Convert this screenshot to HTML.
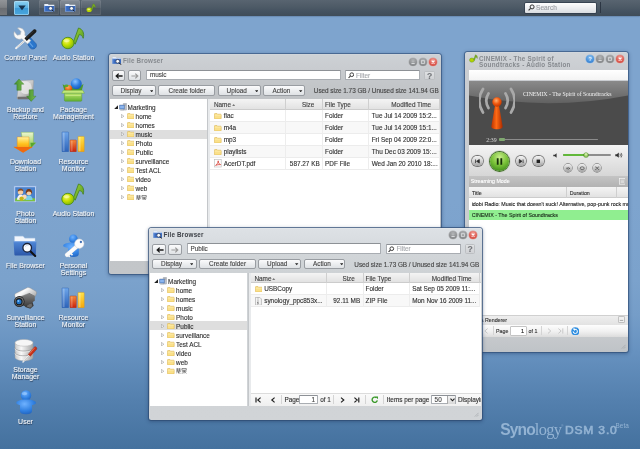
<!DOCTYPE html><html><head><meta charset="utf-8"><title>Synology DSM 3.0</title><style>
*{box-sizing:border-box;margin:0;padding:0}
html,body{width:640px;height:449px;overflow:hidden}
body{position:relative;font-family:"Liberation Sans",sans-serif;font-size:6.4px;color:#303030;-webkit-text-stroke:.12px;
background:linear-gradient(to bottom,rgb(126,164,206) 0px,rgb(126,164,206) 200px,rgb(123,162,204) 280px,rgb(117,157,200) 315px,rgb(103,146,192) 350px,rgb(84,128,174) 400px,rgb(68,113,158) 449px)}
.abs,.t,.w,.b,.i{position:absolute}
.t{white-space:nowrap;line-height:8px;height:8px}
.lbl{position:absolute;white-space:nowrap;font-size:7px;line-height:7px;color:#f4f6f8;text-align:center;width:60px;text-shadow:0.5px 0.8px 0.8px rgba(20,30,50,.75)}
#bar{position:absolute;left:0;top:0;width:640px;height:16px;background:linear-gradient(to bottom,#586470 0,#4d5a66 45%,#445260 70%,#3f4c58 100%);box-shadow:0 .5px 1.5px rgba(50,70,100,.6)}
.tb{position:absolute;top:0;height:15px;border-radius:1.5px;background:linear-gradient(to bottom,#77808d,#59626f 50%,#4b5461 52%,#4d5663);box-shadow:inset 0 0 0 .5px rgba(255,255,255,.12)}
.win{position:absolute;border-radius:2.5px;background:linear-gradient(to bottom,#d2d7dc 0,#cdd1d5 1.5px,#c9ccd0 14px,#c3c6c9 30px,#c0c3c6 45px,#c3c6c9 100%);box-shadow:0 0 0 1px rgba(45,75,115,.58),0 1px 3.5px 1px rgba(30,55,95,.42)}
.ttl{position:absolute;font-weight:bold;font-size:6.3px;letter-spacing:.2px;color:#868a8f;-webkit-text-stroke:0;white-space:nowrap;line-height:8px}
.btn{position:absolute;height:10px;border:.8px solid #999da2;border-radius:1.5px;background:linear-gradient(to bottom,#fbfbfc,#eceef0 50%,#dfe2e5);text-align:center;line-height:8.5px;white-space:nowrap;color:#444}
.inp{position:absolute;height:10.5px;background:#fff;border:.8px solid #a9adb2;border-top-color:#8d9196;border-radius:1px;line-height:9px;white-space:nowrap;color:#444}
.pane{position:absolute;background:#fff;overflow:hidden}
.hd{position:absolute;background:linear-gradient(to bottom,#f4f4f4,#e2e2e2);border-bottom:.6px solid #cccccc}
.cb{position:absolute;width:8.2px;height:8.2px;border-radius:50%}
.sep{position:absolute;width:.6px;background:#d4d4d4}
body>*:not(#bar),#bar>*{filter:blur(.3px)}
</style></head><body>
<div id="bar">
<div class="abs" style="left:-3px;top:-3px;width:10px;height:18px;background:linear-gradient(to bottom,#9a9da1,#7d8084 58%,#6a6d72 60%,#74777b)"></div>
<div class="abs" style="left:14px;top:.5px;width:15px;height:14.5px;border-radius:2px;background:linear-gradient(to bottom,#8fd2f2,#58b0e2 50%,#3d9ad6 52%,#4aa6dc);box-shadow:0 0 0 .6px #bfe6fa inset,0 0 1px #2b4a66"></div>
<svg class="abs" style="left:17.5px;top:5px" width="8" height="6" viewBox="0 0 8 6"><path d="M0.3 0.6h7.4L4 5.2z" fill="#16324d"/></svg>
<div class="tb" style="left:39px;width:19.5px;background:linear-gradient(to bottom,#6e7883,#57626d 50%,#4c5762 52%,#4f5a65)"></div>
<div class="tb" style="left:60px;width:19.5px;background:linear-gradient(to bottom,#868e98,#6c7580 50%,#606a75 52%,#646d78)"></div>
<div class="tb" style="left:81px;width:19.5px;background:linear-gradient(to bottom,#6e7883,#57626d 50%,#4c5762 52%,#4f5a65)"></div>
<svg class="abs" style="left:43.5px;top:3px" width="11" height="9" viewBox="0 0 11 9"><path d="M0.3 .9h3.600l.8.900h5.600v6.700H0.300z" fill="#eaf1fb"/><path d="M0.300 3h10v5.500H0.300z" fill="#376ac0"/><path d="M.3 3h.9v5.500H.3z" fill="#6f9be0"/><circle cx="6.6" cy="5.4" r="1.9" fill="#f2f6fb" stroke="#1b2a44" stroke-width=".6"/><path d="M8 6.9l1.6 1.6" stroke="#111" stroke-width=".9"/></svg>
<svg class="abs" style="left:64.5px;top:3px" width="11" height="9" viewBox="0 0 11 9"><path d="M0.3 .9h3.600l.8.900h5.600v6.700H0.300z" fill="#eaf1fb"/><path d="M0.300 3h10v5.500H0.300z" fill="#376ac0"/><path d="M.3 3h.9v5.500H.3z" fill="#6f9be0"/><circle cx="6.6" cy="5.4" r="1.9" fill="#f2f6fb" stroke="#1b2a44" stroke-width=".6"/><path d="M8 6.9l1.6 1.6" stroke="#111" stroke-width=".9"/></svg>
<svg class="abs" style="left:86px;top:3px" width="10" height="10" viewBox="0 0 10 10"><ellipse cx="3.2" cy="6.8" rx="2.7" ry="2.3" fill="#b5d400"/><path d="M5 6.500L7.100.8c1.700.3 2.700 2 2.100 4.300-.5-1.200-1.100-1.600-1.800-1.600L6.100 7.300z" fill="#78aa22" stroke="#5a8c18" stroke-width=".3"/><ellipse cx="2.8" cy="6.3" rx="1.4" ry=".9" fill="#e4f07a"/></svg>
<div class="abs" style="left:525px;top:2.5px;width:71px;height:10.5px;border-radius:1px;background:linear-gradient(to bottom,#fdfdfd,#e9ebee 60%,#d9dce0);box-shadow:0 0 0 .7px #2f3b4a"></div>
<svg class="abs" style="left:527.5px;top:4px" width="7" height="7" viewBox="0 0 7 7"><circle cx="4.1" cy="2.9" r="2" fill="none" stroke="#333" stroke-width="1"/><path d="M2.6 4.4L.6 6.4" stroke="#333" stroke-width="1.1"/></svg>
<div class="t" style="left:536px;top:3.6px;color:#9a9da2;font-size:6.6px">Search</div>
<div class="abs" style="left:600.3px;top:2px;width:.7px;height:11px;background:#2c3643"></div>
</div><svg width="0" height="0" style="position:absolute"><defs>
<radialGradient id="gNote" cx=".38" cy=".35" r=".75"><stop offset="0" stop-color="#f3f56a"/><stop offset=".45" stop-color="#c6e000"/><stop offset="1" stop-color="#6fae12"/></radialGradient>
<linearGradient id="gFlag" x1="0" y1="0" x2="1" y2="1"><stop offset="0" stop-color="#9fd43a"/><stop offset="1" stop-color="#4f9420"/></linearGradient>
<linearGradient id="gBlue" x1="0" y1="0" x2="0" y2="1"><stop offset="0" stop-color="#6ea6ea"/><stop offset="1" stop-color="#2c62b8"/></linearGradient>
<linearGradient id="gRed" x1="0" y1="0" x2="0" y2="1"><stop offset="0" stop-color="#f58a3a"/><stop offset="1" stop-color="#c8200c"/></linearGradient>
<linearGradient id="gYel" x1="0" y1="0" x2="0" y2="1"><stop offset="0" stop-color="#ffe24a"/><stop offset="1" stop-color="#f4a70c"/></linearGradient>
<linearGradient id="gOr" x1="0" y1="0" x2="0" y2="1"><stop offset="0" stop-color="#fff3a0"/><stop offset=".45" stop-color="#ffc21c"/><stop offset="1" stop-color="#f07010"/></linearGradient>
<linearGradient id="gGr" x1="0" y1="0" x2="0" y2="1"><stop offset="0" stop-color="#eef7d0"/><stop offset="1" stop-color="#8cc848"/></linearGradient>
<linearGradient id="gHdd" x1="0" y1="0" x2="1" y2="1"><stop offset="0" stop-color="#f4f4f4"/><stop offset=".5" stop-color="#c9c9c9"/><stop offset="1" stop-color="#8e8e8e"/></linearGradient>
<linearGradient id="gArr" x1="0" y1="0" x2="1" y2="0"><stop offset="0" stop-color="#3f8a2c"/><stop offset="1" stop-color="#7cc050"/></linearGradient>
<linearGradient id="gBox" x1="0" y1="0" x2="0" y2="1"><stop offset="0" stop-color="#b9e36a"/><stop offset="1" stop-color="#5fae30"/></linearGradient>
<radialGradient id="gBall" cx=".4" cy=".3" r=".8"><stop offset="0" stop-color="#8cc4ff"/><stop offset=".5" stop-color="#2f7ee0"/><stop offset="1" stop-color="#1450a8"/></radialGradient>
<radialGradient id="gOball" cx=".4" cy=".3" r=".8"><stop offset="0" stop-color="#ffb060"/><stop offset=".6" stop-color="#f06010"/><stop offset="1" stop-color="#b83808"/></radialGradient>
<linearGradient id="gFold" x1="0" y1="0" x2="0" y2="1"><stop offset="0" stop-color="#5088d8"/><stop offset="1" stop-color="#2c58aa"/></linearGradient>
<radialGradient id="gUser" cx=".42" cy=".3" r=".8"><stop offset="0" stop-color="#6fb2ff"/><stop offset=".6" stop-color="#2f7fe0"/><stop offset="1" stop-color="#1f5cb4"/></radialGradient>
<linearGradient id="gCyl" x1="0" y1="0" x2="1" y2="0"><stop offset="0" stop-color="#c8c8c8"/><stop offset=".35" stop-color="#f8f8f8"/><stop offset="1" stop-color="#a4a4a4"/></linearGradient>
<linearGradient id="gCam" x1="0" y1="0" x2="0" y2="1"><stop offset="0" stop-color="#8a8a8a"/><stop offset="1" stop-color="#3a3a3a"/></linearGradient>
</defs></svg>
<svg class="abs" style="left:13px;top:26.6px;overflow:visible" width="24" height="24" viewBox="0 0 24 24"><path d="M13 12.5L3 21.2" stroke="#f2f2f2" stroke-width="1.9" stroke-linecap="round"/><path d="M12.6 12.9L4 20.4" stroke="#b0b0b0" stroke-width=".6"/><path d="M12.400 13.800l4.400-3.800 6 6.400c1.200 1.400.900 3.500-.7 4.800-1.600 1.300-3.700 1.200-4.900-.200z" fill="#2a76cc" stroke="#1a4f96" stroke-width=".5"/><path d="M15.200 14.200l4.800 5.600" stroke="#7ab4f0" stroke-width="1.100" opacity=".7"/><path transform="translate(-1.300,-1.700) scale(1.160)" d="M2.200 5.400c-.9 2.800.3 5.300 2.600 6.300 1.400.6 2.800.4 3.900-.2l5 4.700 2.800-3-5.200-4.600c.5-1.600.1-3.400-1.200-4.800C8.900 2.400 6.800 1.800 5 2.400l3 3-.6 2.600-2.600.5z" fill="#f8f8f8" stroke="#aeb2b6" stroke-width=".5"/><path d="M11.400 11.300L20.400 2.700c.8-.7 1.900-.6 2.600.1.700.8.700 1.900-.1 2.600L13.800 13.900z" fill="#1c1c1c"/><path d="M13.200 11.200L20.800 4" stroke="#6a6a6a" stroke-width=".7" stroke-dasharray=".8 .7"/></svg>
<svg class="abs" style="left:61px;top:26px;overflow:visible" width="24" height="24" viewBox="0 0 24 24"><path d="M12.400 16L17.500 2c3.900 1 6.200 5 4.700 10.300-.9-2.700-2.500-3.700-4-3.700L14.200 18.200z" fill="url(#gFlag)" stroke="#43801a" stroke-width=".8" stroke-linejoin="round"/><ellipse cx="6.900" cy="17" rx="6.100" ry="5.700" fill="url(#gNote)" stroke="#4f8e16" stroke-width=".9"/><ellipse cx="5.6" cy="14.6" rx="3" ry="1.7" fill="#fbffc0" opacity=".55"/></svg>
<svg class="abs" style="left:13px;top:78px;overflow:visible" width="24" height="24" viewBox="0 0 24 24"><path d="M7.200 2.700l12.300-.7c.7 0 1.100.5 1.100 1.200l-.9 16.600c0 .7-.5 1.200-1.200 1.200H5.200c-.8 0-1.300-.6-1.200-1.300L6 3.800c.1-.7.500-1.100 1.200-1.100z" fill="url(#gHdd)" stroke="#9a9a9a" stroke-width=".4"/><ellipse cx="12.800" cy="9.800" rx="6" ry="6.300" fill="#e9e9e9" opacity=".8"/><path d="M4.500 18.800h15v1.600c0 .5-.4.900-.9.900H5.500c-.6 0-1-.4-1-1z" fill="#6e6e6e"/><path d="M6 1L1.300 6.200h2.600v6.100h4.300V6.200h2.700z" fill="url(#gArr)" stroke="#2f7424" stroke-width=".4"/><path d="M18.200 23.400l-4.600-5.200h2.500v-6.400h4.200v6.400H23z" fill="url(#gArr)" stroke="#2f7424" stroke-width=".4"/></svg>
<svg class="abs" style="left:61px;top:78px;overflow:visible" width="24" height="24" viewBox="0 0 24 24"><path d="M1.600 6.200l4.200 2.300 12.700.1 4-2.700-1.900 7.200H3.500z" fill="#4e9a2a"/><circle cx="15.300" cy="5.800" r="5.500" fill="url(#gBall)"/><circle cx="7.600" cy="10.400" r="3.500" fill="url(#gOball)"/><ellipse cx="5.500" cy="7.800" rx="2" ry="1.300" fill="#5aa82e"/><path d="M2.400 12.300h19.400l1.600 3H.8z" fill="#c3e87a" stroke="#5aa030" stroke-width=".4"/><path d="M3.400 15.300h17.400v7c0 .6-.4 1-1 1H4.400c-.6 0-1-.4-1-1z" fill="url(#gBox)" stroke="#4e9628" stroke-width=".4"/><path d="M4.500 17.500h15.200" stroke="#d8f29a" stroke-width="1" opacity=".6"/></svg>
<svg class="abs" style="left:13px;top:130px;overflow:visible" width="24" height="24" viewBox="0 0 24 24"><path d="M8.200 2.300h12.200v10.500h2.300l-4.300 4.800-8-2z" fill="url(#gGr)" stroke="#7ab83a" stroke-width=".4"/><path d="M17.400 12.800h5.300l-4.600 4.600z" fill="#58a62e"/><path d="M4.200 7h11.800v10h3.300L10.100 22.400.9 17h3.300z" fill="url(#gOr)" stroke="#e8820c" stroke-width=".4"/><path d="M.9 17h18.400l-9.200 5.400z" fill="#f06a0e"/></svg>
<svg class="abs" style="left:61px;top:130px;overflow:visible" width="24" height="24" viewBox="0 0 24 24"><rect x="1" y="2" width="6.600" height="19.800" rx=".6" fill="url(#gBlue)" stroke="#2456a8" stroke-width=".4"/><rect x="9" y="10" width="6.300" height="11.800" rx=".6" fill="url(#gRed)" stroke="#b02808" stroke-width=".4"/><rect x="17" y="6.400" width="6.200" height="15.400" rx=".6" fill="url(#gYel)" stroke="#e09408" stroke-width=".4"/><rect x="1.600" y="2.600" width="2" height="18.500" fill="#fff" opacity=".25"/><rect x="9.600" y="10.600" width="2" height="10.600" fill="#fff" opacity=".22"/><rect x="17.600" y="7" width="2" height="14.200" fill="#fff" opacity=".3"/></svg>
<svg class="abs" style="left:13px;top:182px;overflow:visible" width="24" height="24" viewBox="0 0 24 24"><rect x="1.400" y="4.600" width="22.200" height="16.400" fill="#2a4a7a" opacity=".35"/><rect x="1" y="4" width="22.200" height="16.400" fill="#bcd2f2" stroke="#86a8da" stroke-width=".5"/><rect x="2.200" y="5.200" width="19.800" height="14" fill="#4a82cc"/><path d="M2.200 16.800c3-1.600 6-1.400 9.800-.4 3.600-1 7-1 10 .2v2.600H2.200z" fill="#7cc242"/><path d="M4 17.800c0-3 1.400-5 3.600-5s3.800 2 3.800 5z" fill="#f4f4f4"/><path d="M12.600 18c0-3 1.400-4.600 3.500-4.600s3.500 1.800 3.500 4.600z" fill="#7ad0e8"/><circle cx="7.500" cy="10" r="2.700" fill="#f6cfa4"/><path d="M4.700 9.800c0-2.200 1.400-3.200 2.900-3.200s2.900 1 2.800 3c-1-1.400-3.600-1.800-5.700.2z" fill="#8a4a1c"/><circle cx="15.900" cy="10.600" r="2.700" fill="#f6cfa4"/><path d="M12.900 12.600c-.6-3.600.8-5.600 3-5.600 2.300 0 3.700 2 3.100 5.600-.6-2-1.200-3.200-3.100-3.200s-2.400 1.300-3 3.200z" fill="#7a3a14"/><circle cx="11.500" cy="14.800" r="2.300" fill="#f8dab8"/><circle cx="8.600" cy="16.600" r="2.200" fill="#c8b414"/></svg>
<svg class="abs" style="left:61px;top:182px;overflow:visible" width="24" height="24" viewBox="0 0 24 24"><path d="M12.400 16L17.500 2c3.900 1 6.200 5 4.700 10.300-.9-2.700-2.500-3.700-4-3.700L14.200 18.200z" fill="url(#gFlag)" stroke="#43801a" stroke-width=".8" stroke-linejoin="round"/><ellipse cx="6.900" cy="17" rx="6.100" ry="5.700" fill="url(#gNote)" stroke="#4f8e16" stroke-width=".9"/><ellipse cx="5.6" cy="14.6" rx="3" ry="1.7" fill="#fbffc0" opacity=".55"/></svg>
<svg class="abs" style="left:13px;top:234px;overflow:visible" width="24" height="24" viewBox="0 0 24 24"><path d="M1.600 2.200h8.400l1.800 2h10.200v6H1.600z" fill="#f2f6fc" stroke="#c6d4ea" stroke-width=".4"/><path d="M1.200 7.300h21.400c.5 0 .8.300.8.800l-.6 12.400c0 .5-.4.900-.9.900H2.300c-.5 0-.9-.4-.9-.9L.6 8.100c0-.5.200-.8.600-.8z" fill="url(#gFold)"/><path d="M1 7.700h22" stroke="#8ab0ea" stroke-width=".6"/><path d="M17.400 17.300l4.800 4.700" stroke="#111" stroke-width="2" stroke-linecap="round"/><circle cx="14.200" cy="13.800" r="4.300" fill="#fafcff" stroke="#1a2238" stroke-width="1.300"/><path d="M12.200 13a3 3 0 0 1 3.500-1.800" stroke="#c4d2e8" stroke-width=".8" fill="none"/></svg>
<svg class="abs" style="left:61px;top:234px;overflow:visible" width="24" height="24" viewBox="0 0 24 24"><circle cx="12.400" cy="4.900" r="4.300" fill="url(#gUser)"/><path d="M2.800 10.400c2.200-1.500 5.200-1.900 9.400-1.900s7.200.4 9.400 1.900c1 .7.700 2.200-.5 2.500l-3.300 1v6.200c0 2-1.900 3-5.400 3s-5.400-1-5.400-3v-6.200l-3.600-1c-1.200-.3-1.600-1.800-.6-2.500z" fill="url(#gUser)"/><path d="M15.600 12.600L6 20.900" stroke="#d0d4da" stroke-width="4.200" stroke-linecap="round"/><path d="M15.600 12.600L6 20.900" stroke="#fbfbfb" stroke-width="3.400" stroke-linecap="round"/><path d="M9.800 19.400l1.700 1.900M7.400 21.300l1.400 1.500" stroke="#f4f4f4" stroke-width="1.700"/><circle cx="18.300" cy="9.700" r="4.700" fill="#fcfcfc" stroke="#ccd0d6" stroke-width=".5"/><circle cx="19.900" cy="8" r="1.150" fill="#3f6eb4"/></svg>
<svg class="abs" style="left:13px;top:286px;overflow:visible" width="24" height="24" viewBox="0 0 24 24"><defs><linearGradient id="gHood" x1="0" y1="0" x2="1" y2=".6"><stop offset="0" stop-color="#d8d8d8"/><stop offset=".45" stop-color="#fbfbfb"/><stop offset="1" stop-color="#b4b4b4"/></linearGradient></defs><path d="M12.500 17.500l6.700-2.400 1.500 4.600-3.400 3-5.200-1.600z" fill="#3c3c3c"/><path d="M14.200 18.800l4.300-1.500.8 2.600-2.200 1.800-3-.9z" fill="#6a6a6a"/><path d="M2.600 10.600L15.400 6.400l6.400 3v5.400l-9.400 5.800-9.600-4.200z" fill="url(#gCam)"/><path d="M2.400 7.600L13.600 2c1.200-.6 2.500-.5 3.600.1l5.300 2.900c1 .6 1.300 1.800.9 2.800l-1.200 2.700-6.200-3.200-12.800 5C1.600 11.300 1.200 8.400 2.400 7.600z" fill="url(#gHood)" stroke="#8c8c8c" stroke-width=".4"/><path d="M16 7.300l6.200 3.200" stroke="#6e6e6e" stroke-width=".7"/><ellipse cx="6.300" cy="15.600" rx="5.300" ry="5.500" fill="#262626"/><ellipse cx="6.300" cy="15.600" rx="4.400" ry="4.600" fill="#7a7a7a"/><ellipse cx="6.100" cy="15.700" rx="3.500" ry="3.700" fill="#1a1a1a"/><circle cx="6" cy="15.800" r="2.500" fill="#2070c0"/><circle cx="5.400" cy="15.100" r="1" fill="#7cc0ff"/></svg>
<svg class="abs" style="left:61px;top:286px;overflow:visible" width="24" height="24" viewBox="0 0 24 24"><rect x="1" y="2" width="6.600" height="19.800" rx=".6" fill="url(#gBlue)" stroke="#2456a8" stroke-width=".4"/><rect x="9" y="10" width="6.300" height="11.800" rx=".6" fill="url(#gRed)" stroke="#b02808" stroke-width=".4"/><rect x="17" y="6.400" width="6.200" height="15.400" rx=".6" fill="url(#gYel)" stroke="#e09408" stroke-width=".4"/><rect x="1.600" y="2.600" width="2" height="18.500" fill="#fff" opacity=".25"/><rect x="9.600" y="10.600" width="2" height="10.600" fill="#fff" opacity=".22"/><rect x="17.600" y="7" width="2" height="14.200" fill="#fff" opacity=".3"/></svg>
<svg class="abs" style="left:13px;top:338px;overflow:visible" width="24" height="24" viewBox="0 0 24 24"><path d="M2 4.800v14.400c0 2 4 3.600 9 3.600s9-1.600 9-3.600V4.800z" fill="url(#gCyl)" stroke="#9c9c9c" stroke-width=".4"/><path d="M2 9.600c0 2 4 3.500 9 3.500s9-1.500 9-3.500M2 14.400c0 2 4 3.500 9 3.500s9-1.500 9-3.500" fill="none" stroke="#8c8c8c" stroke-width=".7"/><path d="M2 10.400c0 2 4 3.500 9 3.500s9-1.500 9-3.500M2 15.200c0 2 4 3.500 9 3.500s9-1.500 9-3.500" fill="none" stroke="#fff" stroke-width=".6" opacity=".8"/><ellipse cx="11" cy="4.800" rx="9" ry="3.400" fill="#f6f6f6" stroke="#b0b0b0" stroke-width=".5"/><path d="M16.800 16.800L10 24" stroke="#f0f0f0" stroke-width="1.400" stroke-linecap="round"/><path d="M16.600 17.400l-5.800 6" stroke="#8a8a8a" stroke-width=".4"/><path d="M15.200 16.400l5.800-7c.6-.7 1.500-.8 2.200-.2.700.6.800 1.600.2 2.300l-5.900 6.800z" fill="#c83018" stroke="#8a1c0c" stroke-width=".4"/><path d="M16.800 15.600l5-6" stroke="#f08868" stroke-width=".7"/></svg>
<svg class="abs" style="left:13px;top:390px;overflow:visible" width="24" height="24" viewBox="0 0 24 24"><circle cx="13" cy="5.500" r="5.200" fill="url(#gUser)"/><path d="M4 11.600c2.600-1.700 5.600-2 9-2s6.600.3 9.200 2c1.100.7.800 2.300-.5 2.700l-2.700.9v6c0 2-2.300 3-6 3s-6-1-6-3v-6l-2.600-.9c-1.200-.4-1.500-2-.4-2.700z" fill="url(#gUser)"/><ellipse cx="11.500" cy="3.600" rx="2.800" ry="1.700" fill="#a8d2ff" opacity=".55"/></svg>
<div class="lbl" style="left:-4.5px;top:54.3px">Control Panel</div>
<div class="lbl" style="left:43.5px;top:54.3px">Audio Station</div>
<div class="lbl" style="left:-4.5px;top:106.3px">Backup and</div>
<div class="lbl" style="left:-4.5px;top:113.3px">Restore</div>
<div class="lbl" style="left:43.5px;top:106.3px">Package</div>
<div class="lbl" style="left:43.5px;top:113.3px">Management</div>
<div class="lbl" style="left:-4.5px;top:158.3px">Download</div>
<div class="lbl" style="left:-4.5px;top:165.3px">Station</div>
<div class="lbl" style="left:43.5px;top:158.3px">Resource</div>
<div class="lbl" style="left:43.5px;top:165.3px">Monitor</div>
<div class="lbl" style="left:-4.5px;top:210.3px">Photo</div>
<div class="lbl" style="left:-4.5px;top:217.3px">Station</div>
<div class="lbl" style="left:43.5px;top:210.3px">Audio Station</div>
<div class="lbl" style="left:-4.5px;top:262.3px">File Browser</div>
<div class="lbl" style="left:43.5px;top:262.3px">Personal</div>
<div class="lbl" style="left:43.5px;top:269.3px">Settings</div>
<div class="lbl" style="left:-4.5px;top:314.3px">Surveillance</div>
<div class="lbl" style="left:-4.5px;top:321.3px">Station</div>
<div class="lbl" style="left:43.5px;top:314.3px">Resource</div>
<div class="lbl" style="left:43.5px;top:321.3px">Monitor</div>
<div class="lbl" style="left:-4.5px;top:366.3px">Storage</div>
<div class="lbl" style="left:-4.5px;top:373.3px">Manager</div>
<div class="lbl" style="left:-4.5px;top:418.3px">User</div><div class="win" style="left:108.9px;top:54.2px;width:332.3px;height:220.3px;"><div class="abs" style="left:-0.4px;top:-0.2px;width:332.7px;height:220.5px">
<svg class="abs" style="left:3.6px;top:2.2px" width="9.800" height="9.400" viewBox="0 0 9.800 9.400"><path d="M.4 1h3.400l.8.900h4.400v2H.4z" fill="#eef3fb" stroke="#b9c8e0" stroke-width=".3"/><path d="M.4 2.800h8.600v5H.4z" fill="#3a6cc2"/><path d="M.4 2.800h.9v5H.4z" fill="#7aa2e2"/><path d="M.4 2.800h8.600" stroke="#9cbcec" stroke-width=".5"/><circle cx="5.700" cy="5.300" r="1.900" fill="#f6f9fd" stroke="#1a2744" stroke-width=".65"/><path d="M7.100 6.800l1.900 1.900" stroke="#111" stroke-width="1"/></svg>
<div class="ttl" style="left:14.500px;top:3.200px;color:#868a8f">File Browser</div>
<div class="cb" style="left:300.2px;top:3.5px;background:radial-gradient(circle at 50% 30%,#b2b4b6,#909294 55%,#7c7e80);box-shadow:0 0 0 .6px #b4b6b8,0 .5px .7px rgba(255,255,255,.6)"><svg width="8.200" height="8.200" viewBox="0 0 8.200 8.200" style="display:block"><path d="M2.500 5.500h3.200" stroke="#d8dadc" stroke-width="1"/><path d="M2.900 3.700h2.400" stroke="#b8babc" stroke-width=".8"/></svg></div>
<div class="cb" style="left:310.2px;top:3.5px;background:radial-gradient(circle at 50% 30%,#b2b4b6,#909294 55%,#7c7e80);box-shadow:0 0 0 .6px #b4b6b8,0 .5px .7px rgba(255,255,255,.6)"><svg width="8.200" height="8.200" viewBox="0 0 8.200 8.200" style="display:block"><rect x="2.600" y="2.700" width="3" height="2.800" fill="none" stroke="#d8dadc" stroke-width=".8"/></svg></div>
<div class="cb" style="left:320.2px;top:3.5px;background:radial-gradient(circle at 50% 30%,#f2a49c,#de5e54 55%,#cf463c);box-shadow:0 0 0 .6px #d8a09a,0 .5px .7px rgba(255,255,255,.6)"><svg width="8.200" height="8.200" viewBox="0 0 8.200 8.200" style="display:block"><path d="M2.700 2.700l2.800 2.800M5.500 2.700L2.700 5.500" stroke="#fff" stroke-width="1.100"/></svg></div>
<div class="btn" style="left:3.300px;top:16.100px;width:13.600px;height:11px;border-radius:2px"><svg width="8" height="6" viewBox="0 0 8 6" style="position:absolute;left:2.300px;top:2px"><path d="M7.600 3H1.600M3.700.6L1.200 3l2.500 2.400" fill="none" stroke="#1a1a1a" stroke-width="1.300"/></svg></div>
<div class="btn" style="left:19.200px;top:16.100px;width:13.600px;height:11px;border-radius:2px"><svg width="8" height="6" viewBox="0 0 8 6" style="position:absolute;left:2.300px;top:2px"><path d="M.4 3h6M4.300.6L6.800 3 4.300 5.400" fill="none" stroke="#9a9a9a" stroke-width="1.200"/></svg></div>
<div class="inp" style="left:37.700px;top:15.800px;width:194.500px"><span class="t" style="left:2.700px;top:.600px">music</span></div>
<div class="inp" style="left:236.800px;top:16.200px;width:75px;height:10.300px"><svg class="abs" style="left:1.600px;top:1.300px" width="6.500" height="6.500" viewBox="0 0 7 7"><circle cx="4.100" cy="2.900" r="2" fill="none" stroke="#333" stroke-width="1"/><path d="M2.600 4.400L.6 6.400" stroke="#333" stroke-width="1.100"/></svg><span class="t" style="left:9.600px;top:.500px;color:#a4a7ab">Filter</span></div>
<div class="btn" style="left:315.800px;top:16.600px;width:10.600px;height:9.800px;font-weight:bold;color:#74777b;font-size:8.600px;line-height:8.800px;background:linear-gradient(#dfe1e3,#d0d2d5);border-color:#bcbfc2">?</div>
<div class="btn" style="left:3.2px;top:31px;width:44.4px;height:10.800px;border-radius:2px"><span class="t" style="left:7.9px;top:.800px">Display</span><svg class="abs" style="left:36.9px;top:3.8px" width="3.400" height="2.400" viewBox="0 0 3.400 2.400"><path d="M0 .2h3.400L1.700 2.300z" fill="#222"/></svg></div>
<div class="btn" style="left:49.9px;top:31px;width:57px;height:10.800px;border-radius:2px"><span class="t" style="left:9.2px;top:.800px">Create folder</span></div>
<div class="btn" style="left:109.1px;top:31px;width:43.2px;height:10.800px;border-radius:2px"><span class="t" style="left:8.0px;top:.800px">Upload</span><svg class="abs" style="left:36.1px;top:3.8px" width="3.400" height="2.400" viewBox="0 0 3.400 2.400"><path d="M0 .2h3.400L1.700 2.300z" fill="#222"/></svg></div>
<div class="btn" style="left:154.9px;top:31px;width:41.2px;height:10.800px;border-radius:2px"><span class="t" style="left:8.2px;top:.800px">Action</span><svg class="abs" style="left:34.8px;top:3.8px" width="3.400" height="2.400" viewBox="0 0 3.400 2.400"><path d="M0 .2h3.400L1.700 2.300z" fill="#222"/></svg></div>
<div class="t" style="left:205.300px;top:33.300px;color:#444;letter-spacing:-.03px">Used size 1.73 GB / Unused size 141.94 GB</div>
<div class="pane" style="left:1.100px;top:45px;width:97.400px;height:161.7px"><div class="abs" style="left:.4px;top:0">
<svg class="abs" style="left:3.600px;top:6.3px" width="4.200" height="4.200" viewBox="0 0 4.200 4.200"><path d="M4 .2v3.800H.2z" fill="#222"/></svg>
<svg class="abs" style="left:9px;top:4.3px" width="8" height="8" viewBox="0 0 8 8"><rect x="4.300" y=".3" width="3.200" height="6.800" rx=".3" fill="#c2c6cc" stroke="#858b95" stroke-width=".4"/><path d="M4.900 1.400h2M4.900 2.400h2" stroke="#8a9098" stroke-width=".4"/><rect x=".4" y="2" width="5.200" height="4.300" rx=".4" fill="#4f7fc8" stroke="#7e8ca4" stroke-width=".5"/><rect x="1.100" y="2.700" width="3.800" height="2.700" fill="#8cb6ee"/><path d="M1.600 6.500h2.800l.5 1.100H1.100z" fill="#a4aab4"/></svg>
<div class="t" style="left:17.600px;top:5.1px">Marketing</div>
<svg class="abs" style="left:10.800px;top:15.1px" width="3.400" height="4.400" viewBox="0 0 3.400 4.400"><path d="M.4.400l2.500 1.800L.4 4z" fill="#fff" stroke="#8a8a8a" stroke-width=".5"/></svg>
<svg class="abs" style="left:16.7px;top:14.4px" width="7.400" height="6.100" viewBox="0 0 8 6.6"><path d="M.4 1.3c0-.5.3-.8.8-.8h2l.7.8h3.200c.4 0 .7.300.7.700v3.800c0 .400-.3.700-.7.700H1.100c-.4 0-.7-.3-.7-.7z" fill="#fae08a" stroke="#d4a636" stroke-width=".5"/><path d="M.7 2.400h6.800" stroke="#fdf0bc" stroke-width=".6"/></svg>
<div class="t" style="left:25.600px;top:14.1px">home</div>
<svg class="abs" style="left:10.800px;top:24.1px" width="3.400" height="4.400" viewBox="0 0 3.400 4.400"><path d="M.4.400l2.500 1.800L.4 4z" fill="#fff" stroke="#8a8a8a" stroke-width=".5"/></svg>
<svg class="abs" style="left:16.7px;top:23.400000000000002px" width="7.400" height="6.100" viewBox="0 0 8 6.6"><path d="M.4 1.3c0-.5.3-.8.8-.8h2l.7.8h3.200c.4 0 .7.300.7.700v3.800c0 .400-.3.700-.7.700H1.100c-.4 0-.7-.3-.7-.7z" fill="#fae08a" stroke="#d4a636" stroke-width=".5"/><path d="M.7 2.400h6.800" stroke="#fdf0bc" stroke-width=".6"/></svg>
<div class="t" style="left:25.600px;top:23.1px">homes</div>
<div class="abs" style="left:0;top:30.5px;width:97px;height:9px;background:#dedede"></div>
<svg class="abs" style="left:10.800px;top:33.1px" width="3.400" height="4.400" viewBox="0 0 3.400 4.400"><path d="M.4.400l2.500 1.800L.4 4z" fill="#fff" stroke="#8a8a8a" stroke-width=".5"/></svg>
<svg class="abs" style="left:16.7px;top:32.4px" width="7.400" height="6.100" viewBox="0 0 8 6.6"><path d="M.4 1.3c0-.5.3-.8.8-.8h2l.7.8h3.200c.4 0 .7.300.7.700v3.800c0 .400-.3.700-.7.700H1.100c-.4 0-.7-.3-.7-.7z" fill="#fae08a" stroke="#d4a636" stroke-width=".5"/><path d="M.7 2.400h6.800" stroke="#fdf0bc" stroke-width=".6"/></svg>
<div class="t" style="left:25.600px;top:32.1px">music</div>
<svg class="abs" style="left:10.800px;top:42.1px" width="3.400" height="4.400" viewBox="0 0 3.400 4.400"><path d="M.4.400l2.500 1.800L.4 4z" fill="#fff" stroke="#8a8a8a" stroke-width=".5"/></svg>
<svg class="abs" style="left:16.7px;top:41.4px" width="7.400" height="6.100" viewBox="0 0 8 6.6"><path d="M.4 1.3c0-.5.3-.8.8-.8h2l.7.8h3.200c.4 0 .7.300.7.700v3.800c0 .400-.3.700-.7.700H1.100c-.4 0-.7-.3-.7-.7z" fill="#fae08a" stroke="#d4a636" stroke-width=".5"/><path d="M.7 2.400h6.800" stroke="#fdf0bc" stroke-width=".6"/></svg>
<div class="t" style="left:25.600px;top:41.1px">Photo</div>
<svg class="abs" style="left:10.800px;top:51.1px" width="3.400" height="4.400" viewBox="0 0 3.400 4.400"><path d="M.4.400l2.500 1.800L.4 4z" fill="#fff" stroke="#8a8a8a" stroke-width=".5"/></svg>
<svg class="abs" style="left:16.7px;top:50.4px" width="7.400" height="6.100" viewBox="0 0 8 6.6"><path d="M.4 1.3c0-.5.3-.8.8-.8h2l.7.8h3.200c.4 0 .7.300.7.700v3.800c0 .400-.3.700-.7.700H1.100c-.4 0-.7-.3-.7-.7z" fill="#fae08a" stroke="#d4a636" stroke-width=".5"/><path d="M.7 2.400h6.800" stroke="#fdf0bc" stroke-width=".6"/></svg>
<div class="t" style="left:25.600px;top:50.1px">Public</div>
<svg class="abs" style="left:10.800px;top:60.1px" width="3.400" height="4.400" viewBox="0 0 3.400 4.400"><path d="M.4.400l2.500 1.800L.4 4z" fill="#fff" stroke="#8a8a8a" stroke-width=".5"/></svg>
<svg class="abs" style="left:16.7px;top:59.4px" width="7.400" height="6.100" viewBox="0 0 8 6.6"><path d="M.4 1.3c0-.5.3-.8.8-.8h2l.7.8h3.200c.4 0 .7.300.7.700v3.800c0 .400-.3.700-.7.700H1.100c-.4 0-.7-.3-.7-.7z" fill="#fae08a" stroke="#d4a636" stroke-width=".5"/><path d="M.7 2.400h6.800" stroke="#fdf0bc" stroke-width=".6"/></svg>
<div class="t" style="left:25.600px;top:59.1px">surveillance</div>
<svg class="abs" style="left:10.800px;top:69.1px" width="3.400" height="4.400" viewBox="0 0 3.400 4.400"><path d="M.4.400l2.500 1.800L.4 4z" fill="#fff" stroke="#8a8a8a" stroke-width=".5"/></svg>
<svg class="abs" style="left:16.7px;top:68.39999999999999px" width="7.400" height="6.100" viewBox="0 0 8 6.6"><path d="M.4 1.3c0-.5.3-.8.8-.8h2l.7.8h3.200c.4 0 .7.300.7.700v3.800c0 .400-.3.700-.7.700H1.100c-.4 0-.7-.3-.7-.7z" fill="#fae08a" stroke="#d4a636" stroke-width=".5"/><path d="M.7 2.400h6.800" stroke="#fdf0bc" stroke-width=".6"/></svg>
<div class="t" style="left:25.600px;top:68.1px">Test ACL</div>
<svg class="abs" style="left:10.800px;top:78.1px" width="3.400" height="4.400" viewBox="0 0 3.400 4.400"><path d="M.4.400l2.500 1.800L.4 4z" fill="#fff" stroke="#8a8a8a" stroke-width=".5"/></svg>
<svg class="abs" style="left:16.7px;top:77.39999999999999px" width="7.400" height="6.100" viewBox="0 0 8 6.6"><path d="M.4 1.3c0-.5.3-.8.8-.8h2l.7.8h3.200c.4 0 .7.300.7.700v3.800c0 .400-.3.700-.7.700H1.100c-.4 0-.7-.3-.7-.7z" fill="#fae08a" stroke="#d4a636" stroke-width=".5"/><path d="M.7 2.400h6.800" stroke="#fdf0bc" stroke-width=".6"/></svg>
<div class="t" style="left:25.600px;top:77.1px">video</div>
<svg class="abs" style="left:10.800px;top:87.1px" width="3.400" height="4.400" viewBox="0 0 3.400 4.400"><path d="M.4.400l2.500 1.800L.4 4z" fill="#fff" stroke="#8a8a8a" stroke-width=".5"/></svg>
<svg class="abs" style="left:16.7px;top:86.39999999999999px" width="7.400" height="6.100" viewBox="0 0 8 6.6"><path d="M.4 1.3c0-.5.3-.8.8-.8h2l.7.8h3.200c.4 0 .7.300.7.700v3.800c0 .400-.3.700-.7.700H1.100c-.4 0-.7-.3-.7-.7z" fill="#fae08a" stroke="#d4a636" stroke-width=".5"/><path d="M.7 2.400h6.800" stroke="#fdf0bc" stroke-width=".6"/></svg>
<div class="t" style="left:25.600px;top:86.1px">web</div>
<svg class="abs" style="left:10.800px;top:96.1px" width="3.400" height="4.400" viewBox="0 0 3.400 4.400"><path d="M.4.400l2.500 1.800L.4 4z" fill="#fff" stroke="#8a8a8a" stroke-width=".5"/></svg>
<svg class="abs" style="left:16.7px;top:95.39999999999999px" width="7.400" height="6.100" viewBox="0 0 8 6.6"><path d="M.4 1.3c0-.5.3-.8.8-.8h2l.7.8h3.200c.4 0 .7.300.7.700v3.800c0 .400-.3.700-.7.700H1.100c-.4 0-.7-.3-.7-.7z" fill="#fae08a" stroke="#d4a636" stroke-width=".5"/><path d="M.7 2.400h6.800" stroke="#fdf0bc" stroke-width=".6"/></svg>
<svg class="abs" style="left:25.800px;top:95.5px" width="11" height="5.600" viewBox="0 0 11 5.600"><path d="M.3 1h4.400M.3 2.300h4.400M1.300.2v2.600M3.600.2v2.600M.2 3.600h4.600M1 4.300l-.8 1.100M2.500 3.600v1.900M2.500 4.500l1.900.9M5.900.5h4.400v1.700H5.900zM5.900 3.300h4.600M8.100 2.200v3.200M5.700 5.300l1.800-.6M8.300 3.600l2.200 1.800" fill="none" stroke="#3a3a3a" stroke-width=".55"/></svg>
</div></div>
<div class="abs" style="left:98.500px;top:45px;width:3.300px;height:161.7px;background:#e8eaec;border-left:.5px solid #c4c7ca"></div>
<div class="pane" style="left:101.8px;top:45px;width:230.2px;height:161.7px">
<div class="hd" style="left:0;top:0;width:230.2px;height:10.600px"></div>
<div class="sep" style="left:75px;top:0;height:10.600px;background:#cfcfcf"></div>
<div class="sep" style="left:111.8px;top:0;height:10.600px;background:#cfcfcf"></div>
<div class="sep" style="left:158px;top:0;height:10.600px;background:#cfcfcf"></div>
<div class="sep" style="left:228.7px;top:0;height:10.600px;background:#cfcfcf"></div>
<div class="t" style="left:3.600px;top:2.300px;color:#3e3e3e">Name</div><svg class="abs" style="left:21.400px;top:5.100px" width="3.400" height="2.400" viewBox="0 0 3.400 2.400"><path d="M0 2.200h3.400L1.700.1z" fill="#777"/></svg>
<div class="t" style="left:91.600px;top:2.300px;color:#3e3e3e">Size</div>
<div class="t" style="left:114.800px;top:2.300px;color:#3e3e3e">File Type</div>
<div class="t" style="left:181px;top:2.300px;color:#3e3e3e">Modified Time</div>
<div class="abs" style="left:0;top:10.6px;width:228.7px;height:12px;background:#fff;border-bottom:.6px solid #ececec"></div>
<div class="sep" style="left:75px;top:10.6px;height:12px;background:#ededed"></div>
<div class="sep" style="left:111.8px;top:10.6px;height:12px;background:#ededed"></div>
<div class="sep" style="left:158px;top:10.6px;height:12px;background:#ededed"></div>
<div class="sep" style="left:228.7px;top:10.6px;height:12px;background:#ededed"></div>
<svg class="abs" style="left:3.9px;top:13.600000000000001px" width="7.400" height="6.100" viewBox="0 0 8 6.6"><path d="M.4 1.3c0-.5.3-.8.8-.8h2l.7.8h3.200c.4 0 .7.300.7.700v3.800c0 .400-.3.700-.7.700H1.100c-.4 0-.7-.3-.7-.7z" fill="#fae08a" stroke="#d4a636" stroke-width=".5"/><path d="M.7 2.400h6.800" stroke="#fdf0bc" stroke-width=".6"/></svg>
<div class="t" style="left:13.400px;top:12.7px">flac</div>
<div class="t" style="left:114.800px;top:12.7px">Folder</div>
<div class="t" style="left:161.400px;top:12.7px">Tue Jul 14 2009 15:2...</div>
<div class="abs" style="left:0;top:22.6px;width:228.7px;height:12px;background:#f8f8f8;border-bottom:.6px solid #ececec"></div>
<div class="sep" style="left:75px;top:22.6px;height:12px;background:#ededed"></div>
<div class="sep" style="left:111.8px;top:22.6px;height:12px;background:#ededed"></div>
<div class="sep" style="left:158px;top:22.6px;height:12px;background:#ededed"></div>
<div class="sep" style="left:228.7px;top:22.6px;height:12px;background:#ededed"></div>
<svg class="abs" style="left:3.9px;top:25.6px" width="7.400" height="6.100" viewBox="0 0 8 6.6"><path d="M.4 1.3c0-.5.3-.8.8-.8h2l.7.8h3.200c.4 0 .7.300.7.700v3.800c0 .400-.3.700-.7.700H1.100c-.4 0-.7-.3-.7-.7z" fill="#fae08a" stroke="#d4a636" stroke-width=".5"/><path d="M.7 2.400h6.800" stroke="#fdf0bc" stroke-width=".6"/></svg>
<div class="t" style="left:13.400px;top:24.700000000000003px">m4a</div>
<div class="t" style="left:114.800px;top:24.700000000000003px">Folder</div>
<div class="t" style="left:161.400px;top:24.700000000000003px">Tue Jul 14 2009 15:1...</div>
<div class="abs" style="left:0;top:34.6px;width:228.7px;height:12px;background:#fff;border-bottom:.6px solid #ececec"></div>
<div class="sep" style="left:75px;top:34.6px;height:12px;background:#ededed"></div>
<div class="sep" style="left:111.8px;top:34.6px;height:12px;background:#ededed"></div>
<div class="sep" style="left:158px;top:34.6px;height:12px;background:#ededed"></div>
<div class="sep" style="left:228.7px;top:34.6px;height:12px;background:#ededed"></div>
<svg class="abs" style="left:3.9px;top:37.6px" width="7.400" height="6.100" viewBox="0 0 8 6.6"><path d="M.4 1.3c0-.5.3-.8.8-.8h2l.7.8h3.200c.4 0 .7.300.7.700v3.800c0 .400-.3.700-.7.700H1.100c-.4 0-.7-.3-.7-.7z" fill="#fae08a" stroke="#d4a636" stroke-width=".5"/><path d="M.7 2.400h6.800" stroke="#fdf0bc" stroke-width=".6"/></svg>
<div class="t" style="left:13.400px;top:36.7px">mp3</div>
<div class="t" style="left:114.800px;top:36.7px">Folder</div>
<div class="t" style="left:161.400px;top:36.7px">Fri Sep 04 2009 22:0...</div>
<div class="abs" style="left:0;top:46.6px;width:228.7px;height:12px;background:#f8f8f8;border-bottom:.6px solid #ececec"></div>
<div class="sep" style="left:75px;top:46.6px;height:12px;background:#ededed"></div>
<div class="sep" style="left:111.8px;top:46.6px;height:12px;background:#ededed"></div>
<div class="sep" style="left:158px;top:46.6px;height:12px;background:#ededed"></div>
<div class="sep" style="left:228.7px;top:46.6px;height:12px;background:#ededed"></div>
<svg class="abs" style="left:3.9px;top:49.6px" width="7.400" height="6.100" viewBox="0 0 8 6.6"><path d="M.4 1.3c0-.5.3-.8.8-.8h2l.7.8h3.200c.4 0 .7.300.7.700v3.800c0 .400-.3.700-.7.700H1.100c-.4 0-.7-.3-.7-.7z" fill="#fae08a" stroke="#d4a636" stroke-width=".5"/><path d="M.7 2.400h6.800" stroke="#fdf0bc" stroke-width=".6"/></svg>
<div class="t" style="left:13.400px;top:48.7px">playlists</div>
<div class="t" style="left:114.800px;top:48.7px">Folder</div>
<div class="t" style="left:161.400px;top:48.7px">Thu Dec 03 2009 15:...</div>
<div class="abs" style="left:0;top:58.6px;width:228.7px;height:12px;background:#fff;border-bottom:.6px solid #ececec"></div>
<div class="sep" style="left:75px;top:58.6px;height:12px;background:#ededed"></div>
<div class="sep" style="left:111.8px;top:58.6px;height:12px;background:#ededed"></div>
<div class="sep" style="left:158px;top:58.6px;height:12px;background:#ededed"></div>
<div class="sep" style="left:228.7px;top:58.6px;height:12px;background:#ededed"></div>
<svg class="abs" style="left:3.800px;top:60.4px" width="7.600" height="8.400" viewBox="0 0 7.600 8.400"><rect x=".4" y=".4" width="6.800" height="7.600" fill="#fff" stroke="#b9b9b9" stroke-width=".6"/><path d="M1.600 6.400c1.400-1 2.600-2.800 2.600-4.600 0 1.800 1 3.400 2.400 3.800-1.800-.2-3.600.2-5 .8z" fill="none" stroke="#d0281c" stroke-width=".7"/></svg>
<div class="t" style="left:13.400px;top:60.7px">AcerDT.pdf</div>
<div class="t" style="right:120.79999999999998px;top:60.7px">587.27 KB</div>
<div class="t" style="left:114.800px;top:60.7px">PDF File</div>
<div class="t" style="left:161.400px;top:60.7px">Wed Jan 20 2010 18:...</div>
</div>
<svg class="abs" style="right:2.500px;bottom:2.500px" width="5" height="5" viewBox="0 0 5 5"><path d="M4.600.8L.8 4.600M4.600 2.800L2.800 4.600" stroke="#9a9ea3" stroke-width=".6"/></svg>
</div></div>
<div class="win" style="left:465px;top:52px;width:163px;height:299.500px;background:linear-gradient(to bottom,#d4d9de 0,#cfd3d7 1.5px,#cacdd1 17px,#c8cbce 280px,#bfc3c7 100%)">
<svg class="abs" style="left:3.600px;top:2.400px" width="9" height="9" viewBox="0 0 10 10"><ellipse cx="3.200" cy="6.800" rx="2.700" ry="2.300" fill="#b5d400" stroke="#5a9a18" stroke-width=".5"/><path d="M5 6.500L7.100.8c1.700.3 2.700 2 2.100 4.300-.5-1.200-1.100-1.600-1.800-1.600L6.100 7.300z" fill="#78aa22" stroke="#5a8c18" stroke-width=".3"/></svg>
<div class="ttl" style="left:14px;top:3.500px;line-height:6px;letter-spacing:.27px;font-size:6.300px">CINEMIX - The Spirit of<br>Soundtracks - Audio Station</div>
<div class="cb" style="left:120.9px;top:2.6000000000000005px;background:radial-gradient(circle at 50% 30%,#8cc2f0,#4a94de 55%,#2f74c6);box-shadow:0 0 0 .6px #8eb4dc,0 .5px .7px rgba(255,255,255,.6)"><svg width="8.200" height="8.200" viewBox="0 0 8.200 8.200" style="display:block"><text x="4.100" y="6.200" font-size="5.600" font-weight="bold" text-anchor="middle" fill="#e4f2ff" font-family="Liberation Sans">?</text></svg></div>
<div class="cb" style="left:130.9px;top:2.6000000000000005px;background:radial-gradient(circle at 50% 30%,#b2b4b6,#909294 55%,#7c7e80);box-shadow:0 0 0 .6px #b4b6b8,0 .5px .7px rgba(255,255,255,.6)"><svg width="8.200" height="8.200" viewBox="0 0 8.200 8.200" style="display:block"><path d="M2.500 5.500h3.200" stroke="#d8dadc" stroke-width="1"/><path d="M2.900 3.700h2.400" stroke="#b8babc" stroke-width=".8"/></svg></div>
<div class="cb" style="left:140.9px;top:2.6000000000000005px;background:radial-gradient(circle at 50% 30%,#b2b4b6,#909294 55%,#7c7e80);box-shadow:0 0 0 .6px #b4b6b8,0 .5px .7px rgba(255,255,255,.6)"><svg width="8.200" height="8.200" viewBox="0 0 8.200 8.200" style="display:block"><rect x="2.600" y="2.700" width="3" height="2.800" fill="none" stroke="#d8dadc" stroke-width=".8"/></svg></div>
<div class="cb" style="left:150.9px;top:2.6000000000000005px;background:radial-gradient(circle at 50% 30%,#f2a49c,#de5e54 55%,#cf463c);box-shadow:0 0 0 .6px #d8a09a,0 .5px .7px rgba(255,255,255,.6)"><svg width="8.200" height="8.200" viewBox="0 0 8.200 8.200" style="display:block"><path d="M2.700 2.700l2.800 2.800M5.500 2.700L2.700 5.500" stroke="#fff" stroke-width="1.100"/></svg></div>
<div class="abs" style="left:3.500px;top:17.800px;width:159px;height:10.400px;background:linear-gradient(to bottom,#fff,#f4f4f4)"></div>
<div class="abs" style="left:3.500px;top:28.500px;width:159px;height:64.500px;background:#4b4b4b;overflow:hidden">
<svg class="abs" style="left:0;top:0" width="159" height="30" viewBox="0 0 159 30"><defs><linearGradient id="gl" x1="0" y1="0" x2="0" y2="1"><stop offset="0" stop-color="#8a8a8a"/><stop offset="1" stop-color="#616161"/></linearGradient></defs><path d="M0 0h159v14.500Q80 30 0 14.500z" fill="url(#gl)"/></svg>
<svg class="abs" style="left:10px;top:5px" width="36" height="46" viewBox="0 0 36 46"><defs><linearGradient id="gc" x1="0" y1="0" x2="1" y2="0"><stop offset="0" stop-color="#b83200"/><stop offset=".45" stop-color="#ff6a14"/><stop offset="1" stop-color="#a82a00"/></linearGradient><radialGradient id="gb" cx=".42" cy=".35" r=".7"><stop offset="0" stop-color="#ffb070"/><stop offset=".5" stop-color="#f25a10"/><stop offset="1" stop-color="#b83200"/></radialGradient></defs><path d="M9.500 7.500q-4.500 7 0 14.500M4 3q-7.500 11.500 0 23.500M26.500 7.500q4.500 7 0 14.500M32 3q7.500 11.500 0 23.500" fill="none" stroke="#a9a9a9" stroke-width="2.700" stroke-linecap="round"/><path d="M16.200 18.500h3.600l3.900 22c.2 1.600-2.200 2.800-5.700 2.800s-5.900-1.200-5.700-2.800z" fill="url(#gc)"/><circle cx="18" cy="16" r="4.700" fill="url(#gb)"/></svg>
<div class="t" style="left:54.400px;top:9.300px;font-family:'Liberation Serif',serif;font-size:5.750px;color:#f2f2f2;-webkit-text-stroke:0">CINEMIX - The Spirit of Soundtracks</div>
<div class="t" style="left:17.800px;top:55px;font-family:'Liberation Serif',serif;font-size:5.850px;color:#d8d8d8;-webkit-text-stroke:0">2:39</div>
<div class="abs" style="left:31px;top:58.300px;width:98px;height:1.600px;background:#8c8c8c;border-radius:1px"></div>
<div class="abs" style="left:30.500px;top:57.500px;width:5.500px;height:3.200px;background:#7fa870;border-radius:1px"></div>
</div>
<div class="abs" style="left:3.500px;top:93px;width:159px;height:31px;background:linear-gradient(to bottom,#f4f4f4,#e2e2e2 60%,#d6d6d6)"></div>
<div class="abs" style="left:7.3px;top:103.7px;width:10.6px;height:10.6px;border-radius:50%;background:linear-gradient(to bottom,#f4f4f4,#d2d2d2 50%,#a2a2a2);box-shadow:0 0 0 .9px #747474,0 0 0 1.600px #dedede"><svg width="10.6" height="10.6" viewBox="-5 -5 10 10" style="display:block"><path d="M-1.700 -1.700v3.400M1.900 -1.700L-.7 0l2.600 1.700z" fill="#2a2a2a" stroke="#2a2a2a" stroke-width=".7"/></svg></div>
<div class="abs" style="left:24.900px;top:99.700px;width:19px;height:19px;border-radius:50%;background:radial-gradient(circle at 50% 28%,#c9ec8e,#7cc43a 45%,#3f8e1a 85%);box-shadow:0 0 0 .9px #3c6a20,0 0 0 1.700px #cfd4cc"><svg width="19" height="19" viewBox="-10 -10 20 20" style="display:block"><path d="M-1.900 -3.500v7M1.900 -3.500v7" stroke="#16300a" stroke-width="1.900"/></svg></div>
<div class="abs" style="left:50.7px;top:103.7px;width:10.6px;height:10.6px;border-radius:50%;background:linear-gradient(to bottom,#f4f4f4,#d2d2d2 50%,#a2a2a2);box-shadow:0 0 0 .9px #747474,0 0 0 1.600px #dedede"><svg width="10.6" height="10.6" viewBox="-5 -5 10 10" style="display:block"><path d="M1.700 -1.700v3.400M-1.900 -1.700L.7 0l-2.600 1.700z" fill="#2a2a2a" stroke="#2a2a2a" stroke-width=".7"/></svg></div>
<div class="abs" style="left:68.4px;top:103.7px;width:10.6px;height:10.6px;border-radius:50%;background:linear-gradient(to bottom,#f4f4f4,#d2d2d2 50%,#a2a2a2);box-shadow:0 0 0 .9px #747474,0 0 0 1.600px #dedede"><svg width="10.6" height="10.6" viewBox="-5 -5 10 10" style="display:block"><rect x="-1.600" y="-1.600" width="3.200" height="3.200" fill="#222"/></svg></div>
<svg class="abs" style="left:87.600px;top:100.600px" width="5" height="5" viewBox="0 0 5 5"><path d="M.3 1.700h1.500L3.600.3v4.400L1.800 3.300H.3z" fill="#333"/></svg>
<div class="abs" style="left:97.500px;top:102.400px;width:48px;height:1.500px;background:#8e8e8e;border-radius:1px"></div>
<div class="abs" style="left:97.500px;top:102.200px;width:23px;height:1.900px;background:#62b83a;border-radius:1px"></div>
<div class="abs" style="left:118.600px;top:100.800px;width:4.600px;height:4.600px;border-radius:50%;background:radial-gradient(circle at 50% 35%,#e8f6c8,#8cc850 60%,#5a9a2c);box-shadow:0 0 0 .6px #4a8a26"></div>
<svg class="abs" style="left:149.600px;top:100px" width="8" height="6.400" viewBox="0 0 8 6.400"><path d="M.3 2.200h1.500L3.800.6v5.200L1.800 4.200H.3z" fill="#333"/><path d="M4.900 1.800q1 1.400 0 2.800M6.100.9q1.700 2.300 0 4.600" fill="none" stroke="#333" stroke-width=".7"/></svg>
<div class="abs" style="left:98.5px;top:111.8px;width:8.400px;height:8.400px;border-radius:50%;background:linear-gradient(to bottom,#f0f0f0,#cacaca 50%,#a0a0a0);box-shadow:0 0 0 .7px #808080,0 0 0 1.200px #dedede"><svg width="8.400" height="8.400" viewBox="-4.200 -4.200 8.400 8.400" style="display:block"><path d="M-1.800 .6q1.800-2.600 3.600 0M-1.800 -.2q1.800 2.600 3.600 0" fill="none" stroke="#4a4a4a" stroke-width=".7"/></svg></div>
<div class="abs" style="left:112.8px;top:111.8px;width:8.400px;height:8.400px;border-radius:50%;background:linear-gradient(to bottom,#f0f0f0,#cacaca 50%,#a0a0a0);box-shadow:0 0 0 .7px #808080,0 0 0 1.200px #dedede"><svg width="8.400" height="8.400" viewBox="-4.200 -4.200 8.400 8.400" style="display:block"><path d="M-2 0a2 1.400 0 1 0 4 0a2 1.400 0 1 0-4 0" fill="none" stroke="#4a4a4a" stroke-width=".7"/></svg></div>
<div class="abs" style="left:127.49999999999999px;top:111.8px;width:8.400px;height:8.400px;border-radius:50%;background:linear-gradient(to bottom,#f0f0f0,#cacaca 50%,#a0a0a0);box-shadow:0 0 0 .7px #808080,0 0 0 1.200px #dedede"><svg width="8.400" height="8.400" viewBox="-4.200 -4.200 8.400 8.400" style="display:block"><path d="M-2 -1.200h1l2 2.400h1M-2 1.200h1l2-2.400h1" fill="none" stroke="#4a4a4a" stroke-width=".7"/></svg></div>
<div class="abs" style="left:3.500px;top:124px;width:159px;height:10.500px;background:linear-gradient(to bottom,#c4c4c4,#b2b2b2)"></div>
<div class="t" style="left:5.800px;top:125.300px;color:#fff;font-size:5.300px">Streaming Mode</div>
<svg class="abs" style="left:153.600px;top:126.200px" width="6.600" height="6.600" viewBox="0 0 6.600 6.600"><rect x=".4" y=".4" width="5.800" height="5.800" fill="none" stroke="#f4f4f4" stroke-width=".7"/><path d="M1.600 2.200h3.400M1.600 3.400h3.400M1.600 4.600h3.400" stroke="#f4f4f4" stroke-width=".6"/></svg>
<div class="pane" style="left:3.500px;top:134.500px;width:159px;height:128.200px">
<div class="hd" style="left:0;top:0;width:159px;height:11.600px"></div>
<div class="sep" style="left:97.800px;top:0;height:11.600px;background:#cfcfcf"></div><div class="sep" style="left:147px;top:0;height:11.600px;background:#cfcfcf"></div>
<div class="t" style="left:3.400px;top:2px;color:#333;font-size:5.300px">Title</div><div class="t" style="left:101.300px;top:2px;color:#333;font-size:5.300px">Duration</div>
<div class="t" style="left:3.200px;top:13.600px;color:#222;font-size:5.330px">idobi Radio: Music that doesn't suck! Alternative, pop-punk rock music</div>
<div class="abs" style="left:0;top:23px;width:159px;height:10.400px;background:#90ee90"></div>
<div class="t" style="left:3.200px;top:24.400px;color:#1a2a1a;font-size:5.300px">CINEMIX - The Spirit of Soundtracks</div>
</div>
<div class="abs" style="left:3.500px;top:262.700px;width:159px;height:9.900px;background:linear-gradient(to bottom,#eeeeee,#e2e2e2);border-top:.6px solid #d0d0d0"></div>
<div class="t" style="right:121px;top:263.800px;color:#333;font-size:5.300px">Media Renderer</div>
<svg class="abs" style="left:153.400px;top:264.200px" width="7" height="7" viewBox="0 0 7 7"><rect x=".4" y=".4" width="6.200" height="6.200" rx="1" fill="#f0f0f0" stroke="#9a9a9a" stroke-width=".6"/><path d="M1.800 4.400h3.400" stroke="#8a8a8a" stroke-width=".7"/></svg>
<div class="abs" style="left:3.500px;top:272.600px;width:159px;height:12.800px;background:linear-gradient(to bottom,#fdfdfd,#f0f0f0 55%,#dcdcdc)"></div>
<svg class="abs" style="left:18px;top:276px" width="7" height="6" viewBox="0 0 7 6"><path d="M4.600.6L1.800 3l2.800 2.400" fill="none" stroke="#c8c8c8" stroke-width="1"/></svg>
<div class="sep" style="left:27.600px;top:274.300px;height:8.500px"></div>
<div class="t" style="left:31px;top:275px;color:#333;font-size:5.300px">Page</div>
<div class="inp" style="left:44.800px;top:273.800px;width:17.400px;height:9.800px;border-color:#c4c4c4"><span class="t" style="right:2px;top:.300px;color:#222;font-size:5.600px">1</span></div>
<div class="t" style="left:63.600px;top:275px;color:#333;font-size:5.300px">of 1</div>
<div class="sep" style="left:76px;top:274.300px;height:8.500px"></div>
<svg class="abs" style="left:81px;top:276px" width="7" height="6" viewBox="0 0 7 6"><path d="M2 .6L4.800 3 2 5.400" fill="none" stroke="#c8c8c8" stroke-width="1"/></svg>
<svg class="abs" style="left:92px;top:276px" width="7" height="6" viewBox="0 0 7 6"><path d="M1.400.6L4.200 3 1.400 5.400M5.800.4v5.200" fill="none" stroke="#c8c8c8" stroke-width="1"/></svg>
<div class="sep" style="left:102.400px;top:274.300px;height:8.500px"></div>
<svg class="abs" style="left:105.600px;top:274.600px" width="8.600" height="8.600" viewBox="0 0 8.600 8.600"><circle cx="4.300" cy="4.300" r="4" fill="#2f8ee0"/><path d="M2.200 4.400a2.100 2.100 0 1 0 1.400-2" fill="none" stroke="#fff" stroke-width="1"/><path d="M1.400 1.400h2.600v2.600z" fill="#fff"/></svg>
<svg class="abs" style="right:2.500px;bottom:2.500px" width="5" height="5" viewBox="0 0 5 5"><path d="M4.600.8L.8 4.600M4.600 2.800L2.800 4.600" stroke="#9a9ea3" stroke-width=".6"/></svg>
</div>
<div class="win" style="left:149.3px;top:227.9px;width:332.3px;height:192px;background:linear-gradient(to bottom,#e3e7eb 0,#dde1e5 1.500px,#d8dce0 14px,#d1d5d8 28px,#ced2d5 45px,#d1d4d7 100%);box-shadow:0 0 0 1px rgba(45,75,115,.7),0 1px 3.500px 1px rgba(30,55,95,.42)"><div class="abs" style="left:-0.3px;top:-0.4px;width:332.6px;height:192.4px">
<svg class="abs" style="left:3.6px;top:2.2px" width="9.800" height="9.400" viewBox="0 0 9.800 9.400"><path d="M.4 1h3.400l.8.900h4.400v2H.4z" fill="#eef3fb" stroke="#b9c8e0" stroke-width=".3"/><path d="M.4 2.800h8.600v5H.4z" fill="#3a6cc2"/><path d="M.4 2.800h.9v5H.4z" fill="#7aa2e2"/><path d="M.4 2.800h8.600" stroke="#9cbcec" stroke-width=".5"/><circle cx="5.700" cy="5.300" r="1.900" fill="#f6f9fd" stroke="#1a2744" stroke-width=".65"/><path d="M7.100 6.800l1.900 1.900" stroke="#111" stroke-width="1"/></svg>
<div class="ttl" style="left:14.500px;top:3.200px;color:#3d4147">File Browser</div>
<div class="cb" style="left:300.2px;top:3.5px;background:radial-gradient(circle at 50% 30%,#b2b4b6,#909294 55%,#7c7e80);box-shadow:0 0 0 .6px #b4b6b8,0 .5px .7px rgba(255,255,255,.6)"><svg width="8.200" height="8.200" viewBox="0 0 8.200 8.200" style="display:block"><path d="M2.500 5.500h3.200" stroke="#d8dadc" stroke-width="1"/><path d="M2.900 3.700h2.400" stroke="#b8babc" stroke-width=".8"/></svg></div>
<div class="cb" style="left:310.2px;top:3.5px;background:radial-gradient(circle at 50% 30%,#b2b4b6,#909294 55%,#7c7e80);box-shadow:0 0 0 .6px #b4b6b8,0 .5px .7px rgba(255,255,255,.6)"><svg width="8.200" height="8.200" viewBox="0 0 8.200 8.200" style="display:block"><rect x="2.600" y="2.700" width="3" height="2.800" fill="none" stroke="#d8dadc" stroke-width=".8"/></svg></div>
<div class="cb" style="left:320.2px;top:3.5px;background:radial-gradient(circle at 50% 30%,#f2a49c,#de5e54 55%,#cf463c);box-shadow:0 0 0 .6px #d8a09a,0 .5px .7px rgba(255,255,255,.6)"><svg width="8.200" height="8.200" viewBox="0 0 8.200 8.200" style="display:block"><path d="M2.700 2.700l2.800 2.800M5.500 2.700L2.700 5.500" stroke="#fff" stroke-width="1.100"/></svg></div>
<div class="btn" style="left:3.300px;top:16.100px;width:13.600px;height:11px;border-radius:2px"><svg width="8" height="6" viewBox="0 0 8 6" style="position:absolute;left:2.300px;top:2px"><path d="M7.600 3H1.600M3.700.6L1.200 3l2.500 2.400" fill="none" stroke="#1a1a1a" stroke-width="1.300"/></svg></div>
<div class="btn" style="left:19.200px;top:16.100px;width:13.600px;height:11px;border-radius:2px"><svg width="8" height="6" viewBox="0 0 8 6" style="position:absolute;left:2.300px;top:2px"><path d="M.4 3h6M4.300.6L6.800 3 4.300 5.400" fill="none" stroke="#9a9a9a" stroke-width="1.200"/></svg></div>
<div class="inp" style="left:37.700px;top:15.800px;width:194.500px"><span class="t" style="left:2.700px;top:.600px">Public</span></div>
<div class="inp" style="left:236.800px;top:16.200px;width:75px;height:10.300px"><svg class="abs" style="left:1.600px;top:1.300px" width="6.500" height="6.500" viewBox="0 0 7 7"><circle cx="4.100" cy="2.900" r="2" fill="none" stroke="#333" stroke-width="1"/><path d="M2.600 4.400L.6 6.400" stroke="#333" stroke-width="1.100"/></svg><span class="t" style="left:9.600px;top:.500px;color:#a4a7ab">Filter</span></div>
<div class="btn" style="left:315.800px;top:16.600px;width:10.600px;height:9.800px;font-weight:bold;color:#74777b;font-size:8.600px;line-height:8.800px;background:linear-gradient(#dfe1e3,#d0d2d5);border-color:#bcbfc2">?</div>
<div class="btn" style="left:3.2px;top:31px;width:44.4px;height:10.800px;border-radius:2px"><span class="t" style="left:7.9px;top:.800px">Display</span><svg class="abs" style="left:36.9px;top:3.8px" width="3.400" height="2.400" viewBox="0 0 3.400 2.400"><path d="M0 .2h3.400L1.700 2.300z" fill="#222"/></svg></div>
<div class="btn" style="left:49.9px;top:31px;width:57px;height:10.800px;border-radius:2px"><span class="t" style="left:9.2px;top:.800px">Create folder</span></div>
<div class="btn" style="left:109.1px;top:31px;width:43.2px;height:10.800px;border-radius:2px"><span class="t" style="left:8.0px;top:.800px">Upload</span><svg class="abs" style="left:36.1px;top:3.8px" width="3.400" height="2.400" viewBox="0 0 3.400 2.400"><path d="M0 .2h3.400L1.700 2.300z" fill="#222"/></svg></div>
<div class="btn" style="left:154.9px;top:31px;width:41.2px;height:10.800px;border-radius:2px"><span class="t" style="left:8.2px;top:.800px">Action</span><svg class="abs" style="left:34.8px;top:3.8px" width="3.400" height="2.400" viewBox="0 0 3.400 2.400"><path d="M0 .2h3.400L1.700 2.300z" fill="#222"/></svg></div>
<div class="t" style="left:205.300px;top:33.300px;color:#444;letter-spacing:-.03px">Used size 1.73 GB / Unused size 141.94 GB</div>
<div class="pane" style="left:1.100px;top:45px;width:97.400px;height:133.6px"><div class="abs" style="left:.4px;top:0">
<svg class="abs" style="left:3.600px;top:6.3px" width="4.200" height="4.200" viewBox="0 0 4.200 4.200"><path d="M4 .2v3.800H.2z" fill="#222"/></svg>
<svg class="abs" style="left:9px;top:4.3px" width="8" height="8" viewBox="0 0 8 8"><rect x="4.300" y=".3" width="3.200" height="6.800" rx=".3" fill="#c2c6cc" stroke="#858b95" stroke-width=".4"/><path d="M4.900 1.400h2M4.900 2.400h2" stroke="#8a9098" stroke-width=".4"/><rect x=".4" y="2" width="5.200" height="4.300" rx=".4" fill="#4f7fc8" stroke="#7e8ca4" stroke-width=".5"/><rect x="1.100" y="2.700" width="3.800" height="2.700" fill="#8cb6ee"/><path d="M1.600 6.500h2.800l.5 1.100H1.100z" fill="#a4aab4"/></svg>
<div class="t" style="left:17.600px;top:5.1px">Marketing</div>
<svg class="abs" style="left:10.800px;top:15.1px" width="3.400" height="4.400" viewBox="0 0 3.400 4.400"><path d="M.4.400l2.500 1.800L.4 4z" fill="#fff" stroke="#8a8a8a" stroke-width=".5"/></svg>
<svg class="abs" style="left:16.7px;top:14.4px" width="7.400" height="6.100" viewBox="0 0 8 6.6"><path d="M.4 1.3c0-.5.3-.8.8-.8h2l.7.8h3.200c.4 0 .7.300.7.700v3.800c0 .400-.3.700-.7.700H1.100c-.4 0-.7-.3-.7-.7z" fill="#fae08a" stroke="#d4a636" stroke-width=".5"/><path d="M.7 2.400h6.800" stroke="#fdf0bc" stroke-width=".6"/></svg>
<div class="t" style="left:25.600px;top:14.1px">home</div>
<svg class="abs" style="left:10.800px;top:24.1px" width="3.400" height="4.400" viewBox="0 0 3.400 4.400"><path d="M.4.400l2.500 1.800L.4 4z" fill="#fff" stroke="#8a8a8a" stroke-width=".5"/></svg>
<svg class="abs" style="left:16.7px;top:23.400000000000002px" width="7.400" height="6.100" viewBox="0 0 8 6.6"><path d="M.4 1.3c0-.5.3-.8.8-.8h2l.7.8h3.200c.4 0 .7.300.7.700v3.800c0 .400-.3.700-.7.700H1.100c-.4 0-.7-.3-.7-.7z" fill="#fae08a" stroke="#d4a636" stroke-width=".5"/><path d="M.7 2.400h6.800" stroke="#fdf0bc" stroke-width=".6"/></svg>
<div class="t" style="left:25.600px;top:23.1px">homes</div>
<svg class="abs" style="left:10.800px;top:33.1px" width="3.400" height="4.400" viewBox="0 0 3.400 4.400"><path d="M.4.400l2.500 1.800L.4 4z" fill="#fff" stroke="#8a8a8a" stroke-width=".5"/></svg>
<svg class="abs" style="left:16.7px;top:32.4px" width="7.400" height="6.100" viewBox="0 0 8 6.6"><path d="M.4 1.3c0-.5.3-.8.8-.8h2l.7.8h3.200c.4 0 .7.300.7.700v3.800c0 .400-.3.700-.7.700H1.100c-.4 0-.7-.3-.7-.7z" fill="#fae08a" stroke="#d4a636" stroke-width=".5"/><path d="M.7 2.400h6.800" stroke="#fdf0bc" stroke-width=".6"/></svg>
<div class="t" style="left:25.600px;top:32.1px">music</div>
<svg class="abs" style="left:10.800px;top:42.1px" width="3.400" height="4.400" viewBox="0 0 3.400 4.400"><path d="M.4.400l2.500 1.800L.4 4z" fill="#fff" stroke="#8a8a8a" stroke-width=".5"/></svg>
<svg class="abs" style="left:16.7px;top:41.4px" width="7.400" height="6.100" viewBox="0 0 8 6.6"><path d="M.4 1.3c0-.5.3-.8.8-.8h2l.7.8h3.200c.4 0 .7.300.7.700v3.800c0 .400-.3.700-.7.700H1.100c-.4 0-.7-.3-.7-.7z" fill="#fae08a" stroke="#d4a636" stroke-width=".5"/><path d="M.7 2.400h6.800" stroke="#fdf0bc" stroke-width=".6"/></svg>
<div class="t" style="left:25.600px;top:41.1px">Photo</div>
<div class="abs" style="left:0;top:48.5px;width:97px;height:9px;background:#dedede"></div>
<svg class="abs" style="left:10.800px;top:51.1px" width="3.400" height="4.400" viewBox="0 0 3.400 4.400"><path d="M.4.400l2.500 1.800L.4 4z" fill="#fff" stroke="#8a8a8a" stroke-width=".5"/></svg>
<svg class="abs" style="left:16.7px;top:50.4px" width="7.400" height="6.100" viewBox="0 0 8 6.6"><path d="M.4 1.3c0-.5.3-.8.8-.8h2l.7.8h3.200c.4 0 .7.300.7.700v3.800c0 .400-.3.700-.7.700H1.100c-.4 0-.7-.3-.7-.7z" fill="#fae08a" stroke="#d4a636" stroke-width=".5"/><path d="M.7 2.400h6.800" stroke="#fdf0bc" stroke-width=".6"/></svg>
<div class="t" style="left:25.600px;top:50.1px">Public</div>
<svg class="abs" style="left:10.800px;top:60.1px" width="3.400" height="4.400" viewBox="0 0 3.400 4.400"><path d="M.4.400l2.500 1.800L.4 4z" fill="#fff" stroke="#8a8a8a" stroke-width=".5"/></svg>
<svg class="abs" style="left:16.7px;top:59.4px" width="7.400" height="6.100" viewBox="0 0 8 6.6"><path d="M.4 1.3c0-.5.3-.8.8-.8h2l.7.8h3.200c.4 0 .7.300.7.700v3.800c0 .400-.3.700-.7.700H1.100c-.4 0-.7-.3-.7-.7z" fill="#fae08a" stroke="#d4a636" stroke-width=".5"/><path d="M.7 2.400h6.800" stroke="#fdf0bc" stroke-width=".6"/></svg>
<div class="t" style="left:25.600px;top:59.1px">surveillance</div>
<svg class="abs" style="left:10.800px;top:69.1px" width="3.400" height="4.400" viewBox="0 0 3.400 4.400"><path d="M.4.400l2.500 1.800L.4 4z" fill="#fff" stroke="#8a8a8a" stroke-width=".5"/></svg>
<svg class="abs" style="left:16.7px;top:68.39999999999999px" width="7.400" height="6.100" viewBox="0 0 8 6.6"><path d="M.4 1.3c0-.5.3-.8.8-.8h2l.7.8h3.200c.4 0 .7.300.7.700v3.800c0 .400-.3.700-.7.700H1.100c-.4 0-.7-.3-.7-.7z" fill="#fae08a" stroke="#d4a636" stroke-width=".5"/><path d="M.7 2.400h6.800" stroke="#fdf0bc" stroke-width=".6"/></svg>
<div class="t" style="left:25.600px;top:68.1px">Test ACL</div>
<svg class="abs" style="left:10.800px;top:78.1px" width="3.400" height="4.400" viewBox="0 0 3.400 4.400"><path d="M.4.400l2.500 1.800L.4 4z" fill="#fff" stroke="#8a8a8a" stroke-width=".5"/></svg>
<svg class="abs" style="left:16.7px;top:77.39999999999999px" width="7.400" height="6.100" viewBox="0 0 8 6.6"><path d="M.4 1.3c0-.5.3-.8.8-.8h2l.7.8h3.200c.4 0 .7.300.7.700v3.800c0 .400-.3.700-.7.700H1.100c-.4 0-.7-.3-.7-.7z" fill="#fae08a" stroke="#d4a636" stroke-width=".5"/><path d="M.7 2.400h6.800" stroke="#fdf0bc" stroke-width=".6"/></svg>
<div class="t" style="left:25.600px;top:77.1px">video</div>
<svg class="abs" style="left:10.800px;top:87.1px" width="3.400" height="4.400" viewBox="0 0 3.400 4.400"><path d="M.4.400l2.500 1.800L.4 4z" fill="#fff" stroke="#8a8a8a" stroke-width=".5"/></svg>
<svg class="abs" style="left:16.7px;top:86.39999999999999px" width="7.400" height="6.100" viewBox="0 0 8 6.6"><path d="M.4 1.3c0-.5.3-.8.8-.8h2l.7.8h3.200c.4 0 .7.300.7.700v3.800c0 .400-.3.700-.7.700H1.100c-.4 0-.7-.3-.7-.7z" fill="#fae08a" stroke="#d4a636" stroke-width=".5"/><path d="M.7 2.400h6.800" stroke="#fdf0bc" stroke-width=".6"/></svg>
<div class="t" style="left:25.600px;top:86.1px">web</div>
<svg class="abs" style="left:10.800px;top:96.1px" width="3.400" height="4.400" viewBox="0 0 3.400 4.400"><path d="M.4.400l2.500 1.800L.4 4z" fill="#fff" stroke="#8a8a8a" stroke-width=".5"/></svg>
<svg class="abs" style="left:16.7px;top:95.39999999999999px" width="7.400" height="6.100" viewBox="0 0 8 6.6"><path d="M.4 1.3c0-.5.3-.8.8-.8h2l.7.8h3.200c.4 0 .7.300.7.700v3.800c0 .400-.3.700-.7.700H1.100c-.4 0-.7-.3-.7-.7z" fill="#fae08a" stroke="#d4a636" stroke-width=".5"/><path d="M.7 2.400h6.800" stroke="#fdf0bc" stroke-width=".6"/></svg>
<svg class="abs" style="left:25.800px;top:95.5px" width="11" height="5.600" viewBox="0 0 11 5.600"><path d="M.3 1h4.400M.3 2.300h4.400M1.300.2v2.600M3.600.2v2.600M.2 3.600h4.600M1 4.300l-.8 1.100M2.500 3.600v1.900M2.500 4.500l1.900.9M5.900.5h4.400v1.700H5.900zM5.900 3.300h4.600M8.100 2.200v3.200M5.700 5.300l1.800-.6M8.300 3.600l2.200 1.800" fill="none" stroke="#3a3a3a" stroke-width=".55"/></svg>
</div></div>
<div class="abs" style="left:98.500px;top:45px;width:3.300px;height:133.6px;background:#e8eaec;border-left:.5px solid #c4c7ca"></div>
<div class="pane" style="left:101.8px;top:45px;width:230.10000000000002px;height:133.6px">
<div class="hd" style="left:0;top:0;width:230.10000000000002px;height:10.600px"></div>
<div class="sep" style="left:75px;top:0;height:10.600px;background:#cfcfcf"></div>
<div class="sep" style="left:111.8px;top:0;height:10.600px;background:#cfcfcf"></div>
<div class="sep" style="left:158px;top:0;height:10.600px;background:#cfcfcf"></div>
<div class="sep" style="left:228.60000000000002px;top:0;height:10.600px;background:#cfcfcf"></div>
<div class="t" style="left:3.600px;top:2.300px;color:#3e3e3e">Name</div><svg class="abs" style="left:21.400px;top:5.100px" width="3.400" height="2.400" viewBox="0 0 3.400 2.400"><path d="M0 2.200h3.400L1.700.1z" fill="#777"/></svg>
<div class="t" style="left:91.600px;top:2.300px;color:#3e3e3e">Size</div>
<div class="t" style="left:114.800px;top:2.300px;color:#3e3e3e">File Type</div>
<div class="t" style="left:181px;top:2.300px;color:#3e3e3e">Modified Time</div>
<div class="abs" style="left:0;top:10.6px;width:228.60000000000002px;height:12px;background:#fff;border-bottom:.6px solid #ececec"></div>
<div class="sep" style="left:75px;top:10.6px;height:12px;background:#ededed"></div>
<div class="sep" style="left:111.8px;top:10.6px;height:12px;background:#ededed"></div>
<div class="sep" style="left:158px;top:10.6px;height:12px;background:#ededed"></div>
<div class="sep" style="left:228.60000000000002px;top:10.6px;height:12px;background:#ededed"></div>
<svg class="abs" style="left:3.9px;top:13.600000000000001px" width="7.400" height="6.100" viewBox="0 0 8 6.6"><path d="M.4 1.3c0-.5.3-.8.8-.8h2l.7.8h3.200c.4 0 .7.300.7.700v3.800c0 .400-.3.700-.7.700H1.100c-.4 0-.7-.3-.7-.7z" fill="#fae08a" stroke="#d4a636" stroke-width=".5"/><path d="M.7 2.400h6.800" stroke="#fdf0bc" stroke-width=".6"/></svg>
<div class="t" style="left:13.400px;top:12.7px">USBCopy</div>
<div class="t" style="left:114.800px;top:12.7px">Folder</div>
<div class="t" style="left:161.400px;top:12.7px">Sat Sep 05 2009 11:...</div>
<div class="abs" style="left:0;top:22.6px;width:228.60000000000002px;height:12px;background:#f8f8f8;border-bottom:.6px solid #ececec"></div>
<div class="sep" style="left:75px;top:22.6px;height:12px;background:#ededed"></div>
<div class="sep" style="left:111.8px;top:22.6px;height:12px;background:#ededed"></div>
<div class="sep" style="left:158px;top:22.6px;height:12px;background:#ededed"></div>
<div class="sep" style="left:228.60000000000002px;top:22.6px;height:12px;background:#ededed"></div>
<svg class="abs" style="left:4.200px;top:24.200000000000003px" width="6.800" height="8.600" viewBox="0 0 6.800 8.600"><path d="M.4.400h4.400l1.600 1.600v6.200H.4z" fill="#f4f4f4" stroke="#9a9a9a" stroke-width=".6"/><path d="M3 .6v5" stroke="#8a8a8a" stroke-width=".9" stroke-dasharray=".7 .5"/><rect x="2.300" y="5.400" width="1.500" height="1.800" fill="#bbb" stroke="#777" stroke-width=".3"/></svg>
<div class="t" style="left:13.400px;top:24.700000000000003px">synology_ppc853x...</div>
<div class="t" style="right:120.70000000000002px;top:24.700000000000003px">92.11 MB</div>
<div class="t" style="left:114.800px;top:24.700000000000003px">ZIP File</div>
<div class="t" style="left:161.400px;top:24.700000000000003px">Mon Nov 16 2009 11...</div>
<div class="abs" style="left:0;top:120.1px;width:230.10000000000002px;height:13.500px;background:linear-gradient(to bottom,#fafafa,#efefef);border-top:.6px solid #dcdcdc"></div>
<svg class="abs" style="left:4.4px;top:124.1px" width="7" height="6" viewBox="0 0 7 6"><path d="M1 .4v5.200M5.600.6L2.800 3l2.800 2.400" fill="none" stroke="#222" stroke-width="1.2"/></svg>
<svg class="abs" style="left:19.4px;top:124.1px" width="7" height="6" viewBox="0 0 7 6"><path d="M4.600.6L1.800 3l2.800 2.400" fill="none" stroke="#222" stroke-width="1.2"/></svg>
<div class="sep" style="left:30px;top:122.6px;height:8.500px"></div>
<div class="t" style="left:33.600px;top:123.1px">Page</div>
<div class="inp" style="left:48.600px;top:122.1px;width:18.800px;height:9.800px"><span class="t" style="right:2.200px;top:.300px">1</span></div>
<div class="t" style="left:69.400px;top:123.1px">of 1</div>
<div class="sep" style="left:82.200px;top:122.6px;height:8.500px"></div>
<svg class="abs" style="left:88.4px;top:124.1px" width="7" height="6" viewBox="0 0 7 6"><path d="M2 .6L4.800 3 2 5.400" fill="none" stroke="#222" stroke-width="1.2"/></svg>
<svg class="abs" style="left:102.4px;top:124.1px" width="7" height="6" viewBox="0 0 7 6"><path d="M1.400.6L4.200 3 1.400 5.400M5.800.4v5.200" fill="none" stroke="#222" stroke-width="1.2"/></svg>
<div class="sep" style="left:114.200px;top:122.6px;height:8.500px"></div>
<svg class="abs" style="left:119.800px;top:123.1px" width="7.500" height="7.500" viewBox="0 0 7.500 7.500"><path d="M6.300 4.300a2.600 2.600 0 1 1-.8-2.500" fill="none" stroke="#3c9a2c" stroke-width="1.400"/><path d="M4.200.4h3v3z" fill="#3c9a2c"/></svg>
<div class="sep" style="left:132.200px;top:122.6px;height:8.500px"></div>
<div class="t" style="left:136px;top:123.1px">Items per page</div>
<div class="inp" style="left:180.600px;top:122.1px;width:25px;height:9.800px"><span class="t" style="left:2.200px;top:.300px">50</span><div class="abs" style="right:0;top:0;width:8px;height:8.400px;background:linear-gradient(#f4f4f4,#d8d8d8);border-left:.6px solid #aaa"><svg class="abs" style="left:1.600px;top:2.400px" width="5" height="4" viewBox="0 0 5 4"><path d="M.5.600l2 2.200 2-2.200" fill="none" stroke="#222" stroke-width="1.100"/></svg></div></div>
<div class="t" style="left:207.200px;top:123.1px">Displaying 1 - 2 of 2</div>
</div>
<svg class="abs" style="right:2.500px;bottom:2.500px" width="5" height="5" viewBox="0 0 5 5"><path d="M4.600.8L.8 4.600M4.600 2.800L2.800 4.600" stroke="#9a9ea3" stroke-width=".6"/></svg>
</div></div>
<div class="abs" style="left:500.300px;top:417.300px;white-space:nowrap;color:#93b3d3;line-height:18px;height:18px;-webkit-text-stroke:0"><span style="font-weight:bold;font-size:15.600px;letter-spacing:-.9px">Syno</span><span style="font-family:'Liberation Serif',serif;font-size:16.400px;letter-spacing:-.7px">logy</span><span style="font-size:3px;vertical-align:8px">&#174;</span></div>
<div class="abs" style="left:564.800px;top:424.200px;white-space:nowrap;color:#93b3d3;font-size:11.400px;line-height:12px;letter-spacing:.75px;-webkit-text-stroke:.6px;transform:scaleX(1.060);transform-origin:0 0">DSM 3.0</div>
<div class="abs" style="left:615.600px;top:422.400px;white-space:nowrap;color:#93b3d3;font-size:6.400px;line-height:7px;-webkit-text-stroke:0">Beta</div></body></html>
